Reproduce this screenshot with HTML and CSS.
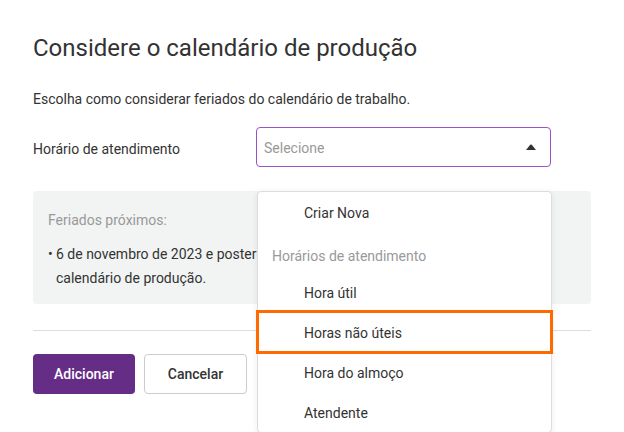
FILE: index.html
```html
<!DOCTYPE html>
<html lang="pt">
<head>
<meta charset="utf-8">
<link rel="stylesheet" href="styles.css">
</head>
<body>
<div class="page">
  <h1 class="title">Considere o calendário de produção</h1>
  <p class="intro">Escolha como considerar feriados do calendário de trabalho.</p>
  <div class="form-row">
    <label class="label">Horário de atendimento</label>
    <div class="select-wrap">
      <div class="select">
        <span class="placeholder">Selecione</span>
        <svg class="caret" width="10" height="6" viewBox="0 0 10 6"><path d="M0 6 L4.2 0.8 Q5 0 5.8 0.8 L10 6 Z" fill="#333"/></svg>
      </div>
      <ul class="menu">
        <li class="item">Criar Nova</li>
        <li class="group">Horários de atendimento</li>
        <li class="item">Hora útil</li>
        <li class="item highlighted">Horas não úteis</li>
        <li class="item">Hora do almoço</li>
        <li class="item">Atendente</li>
      </ul>
    </div>
  </div>
  <div class="panel">
    <div class="panel-title">Feriados próximos:</div>
    <div class="bullet-row">
      <span class="bullet">•</span>
      <span class="bullet-text">6 de novembro de 2023 e posteriormente serão considerados feriados do<br>calendário de produção.</span>
    </div>
  </div>
  <hr class="divider">
  <div class="actions">
    <button class="btn btn-primary">Adicionar</button>
    <button class="btn btn-secondary">Cancelar</button>
  </div>
</div>
</body>
</html>
```

FILE: styles.css
```css
* { box-sizing: border-box; }
html, body {
  margin: 0;
  padding: 0;
  background: #ffffff;
}
body {
  font-family: Roboto, "Liberation Sans", Arial, sans-serif;
  color: #333333;
  font-size: 14px;
  width: 624px;
  height: 432px;
  overflow: hidden;
}
.page {
  padding: 34px 33px 0 33px;
}
.title {
  margin: 0;
  font-size: 24px;
  line-height: 28px;
  font-weight: 400;
  color: #333333;
}
.intro {
  margin: 27px 0 0 0;
  font-size: 14px;
  line-height: 20px;
}
.form-row {
  margin-top: 18px;
  display: flex;
  align-items: center;
  height: 40px;
}
.label {
  width: 223px;
  font-size: 14px;
  line-height: 20px;
  margin-top: 3px;
}
.select-wrap {
  position: relative;
  width: 295px;
}
.select {
  height: 40px;
  border: 1px solid #9a52c8;
  border-radius: 4px;
  display: flex;
  align-items: center;
  justify-content: space-between;
  padding: 0 14px 0 7px;
  background: #fff;
}
.placeholder {
  color: #999999;
  font-size: 14px;
  margin-top: 1px;
}
.caret {
  display: block;
  margin-top: -1px;
}
.menu {
  position: absolute;
  left: 1px;
  top: 64px;
  width: 295px;
  margin: 0;
  padding: 0;
  list-style: none;
  background: #ffffff;
  border: 1px solid #dddddd;
  border-radius: 4px;
  box-shadow: 0 1px 6px rgba(0, 0, 0, 0.08);
  z-index: 5;
}
.item {
  height: 40px;
  line-height: 40px;
  padding-left: 46px;
  padding-top: 1px;
  font-size: 14px;
  color: #333333;
}
.group {
  height: 40px;
  padding: 12px 0 0 14px;
  line-height: 24px;
  font-size: 14px;
  color: #999999;
}
.highlighted {
  outline: 3px solid #ff6a00;
  outline-offset: -1px;
}
.panel {
  margin-top: 24px;
  background: #f2f3f3;
  border-radius: 4px;
  padding: 17px 16px 14px 15px;
  height: 113px;
}
.panel-title {
  color: #999999;
  line-height: 24px;
}
.bullet-row {
  margin-top: 10px;
  display: flex;
  line-height: 24px;
}
.bullet {
  width: 8px;
  flex: none;
}
.bullet-text {
  white-space: nowrap;
}
.divider {
  margin: 26px 0 0 0;
  border: 0;
  border-top: 1px solid #dddddd;
  height: 0;
}
.actions {
  margin-top: 23px;
  display: flex;
  gap: 9px;
}
.btn {
  height: 40px;
  width: 103px;
  border-radius: 4px;
  font-family: Roboto, "Liberation Sans", Arial, sans-serif;
  font-size: 14px;
  font-weight: 500;
}
.btn-primary {
  background: #662d86;
  color: #ffffff;
  border: 0;
  width: 102px;
}
.btn-secondary {
  background: #ffffff;
  color: #333333;
  border: 1px solid #cccccc;
}
```
